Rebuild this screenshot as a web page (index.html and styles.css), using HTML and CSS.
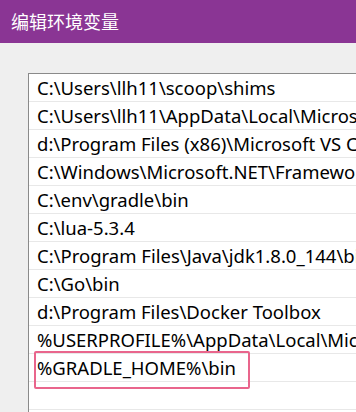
FILE: index.html
```html
<!DOCTYPE html>
<html lang="zh-CN">
<head>
    <meta charset="UTF-8">
    <title>编辑环境变量</title>
    <link rel="stylesheet" href="styles.css">
</head>
<body>
    <div class="titlebar">编辑环境变量</div>
    <div class="content">
        <div class="listbox">
            <div class="row">C:\Users\llh11\scoop\shims</div>
            <div class="row">C:\Users\llh11\AppData\Local\Microsoft\WindowsApps</div>
            <div class="row">d:\Program Files (x86)\Microsoft VS Code\bin</div>
            <div class="row">C:\Windows\Microsoft.NET\Framework64\v4.0.30319</div>
            <div class="row">C:\env\gradle\bin</div>
            <div class="row">C:\lua-5.3.4</div>
            <div class="row">C:\Program Files\Java\jdk1.8.0_144\bin</div>
            <div class="row">C:\Go\bin</div>
            <div class="row">d:\Program Files\Docker Toolbox</div>
            <div class="row">%USERPROFILE%\AppData\Local\Microsoft\WindowsApps</div>
            <div class="row marked">%GRADLE_HOME%\bin<span class="mark"></span></div>
            <div class="row"></div>
        </div>
    </div>
</body>
</html>
```

FILE: styles.css
```css
html, body {
    height: 100%;
}

body {
    margin: 0;
    background: #efefef;
    font-family: 'Noto Sans', 'Noto Sans CJK SC', sans-serif;
    overflow: hidden;
    display: flex;
    flex-direction: column;
}

.titlebar {
    height: 43px;
    background: #8a3594;
    color: #ffffff;
    font-family: 'Noto Sans CJK SC', sans-serif;
    font-size: 18px;
    line-height: 43px;
    padding-left: 11px;
    flex: none;
}

.content {
    flex: 1;
    min-height: 0;
    padding: 30px 0 0 28px;
    display: flex;
}

.listbox {
    flex: 1;
    min-width: 0;
    background: #ffffff;
    border: 1px solid #8a8a8a;
    border-right: none;
    border-bottom: none;
    overflow: hidden;
}

.row {
    position: relative;
    height: 27px;
    border-bottom: 1px solid #e8e8e8;
    padding-left: 8px;
    font-size: 18.5px;
    line-height: 27px;
    color: #000000;
    white-space: nowrap;
}

.mark {
    position: absolute;
    left: 5px;
    top: -3px;
    width: 212px;
    height: 34px;
    border: 2px solid #e9658c;
    border-radius: 2px;
}
```
